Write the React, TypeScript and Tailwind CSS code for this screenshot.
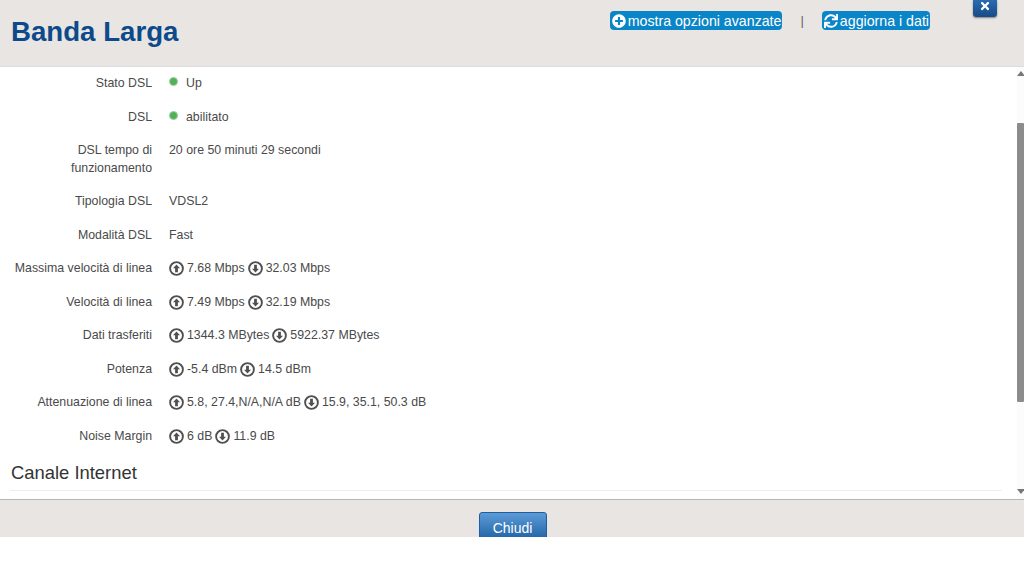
import { Fragment } from "react";
import { FaPlusCircle, FaSync, FaTimes } from "react-icons/fa";

const Dir = ({ up }: { up?: boolean }) => (
  <svg viewBox="0 0 15 15" className={`h-[15px] w-[15px] shrink-0 text-[#505050] ${up ? "" : "rotate-180"}`}>
    <circle cx="7.5" cy="7.5" r="6.4" fill="none" stroke="currentColor" strokeWidth="1.9" />
    <polygon points="7.5,3.4 11,7.2 8.9,7.2 8.9,11.2 6.1,11.2 6.1,7.2 4,7.2" fill="currentColor" />
  </svg>
);

const Speeds = ({ up, down }: { up: string; down: string }) => (
  <div className="flex items-center gap-[3px]">
    <Dir up />
    <span>{up}</span>
    <Dir />
    <span>{down}</span>
  </div>
);

const Status = ({ text }: { text: string }) => (
  <div className="flex items-center">
    <span className="mb-[4px] h-[9px] w-[9px] rounded-full border border-[#9ad09c] bg-[#52b058]" />
    <span className="ml-[8px]">{text}</span>
  </div>
);

const rows = [
  { label: "Stato DSL", value: <Status text="Up" /> },
  { label: "DSL", value: <Status text="abilitato" /> },
  { label: "DSL tempo di funzionamento", value: "20 ore 50 minuti 29 secondi" },
  { label: "Tipologia DSL", value: "VDSL2" },
  { label: "Modalità DSL", value: "Fast" },
  { label: "Massima velocità di linea", value: <Speeds up="7.68 Mbps" down="32.03 Mbps" /> },
  { label: "Velocità di linea", value: <Speeds up="7.49 Mbps" down="32.19 Mbps" /> },
  { label: "Dati trasferiti", value: <Speeds up="1344.3 MBytes" down="5922.37 MBytes" /> },
  { label: "Potenza", value: <Speeds up="-5.4 dBm" down="14.5 dBm" /> },
  { label: "Attenuazione di linea", value: <Speeds up="5.8, 27.4,N/A,N/A dB" down="15.9, 35.1, 50.3 dB" /> },
  { label: "Noise Margin", value: <Speeds up="6 dB" down="11.9 dB" /> },
];

export default function App() {
  return (
    <div className="h-[571px] w-[1024px] overflow-hidden bg-white font-['Liberation_Sans',Arial,sans-serif] text-[12.35px] leading-[17.5px] text-[#4a4a4a]">
      <header className="flex h-[67px] items-start border-b border-[#dcdcdc] bg-[#e9e5e2]">
        <h1 className="mt-[15px] ml-[11px] text-[27.65px] leading-[33px] font-bold text-[#0c4a8c]">Banda Larga</h1>
        <div className="mt-[11px] ml-auto flex items-center text-[14.2px] leading-[18px] text-white">
          <a className="flex h-[19px] items-center gap-[2px] rounded-[4px] bg-[#0a85c7] pr-[1px] pl-[2px]">
            <FaPlusCircle size={14} />
            mostra opzioni avanzate
          </a>
          <span className="mx-[18px] text-[13px] text-[#666]">|</span>
          <a className="flex h-[19px] items-center gap-[2px] rounded-[4px] bg-[#0a85c7] pr-[1px] pl-[2px]">
            <FaSync size={14} />
            aggiorna i dati
          </a>
        </div>
        <button className="mr-[27px] ml-[43px] flex h-[17px] w-[24px] items-center justify-center rounded-b-[3px] bg-gradient-to-b from-[#2a6cb0] to-[#174a86] text-white shadow-[0_1px_2px_rgba(0,0,0,0.45)]">
          <FaTimes size={12} className="mb-[5px]" />
        </button>
      </header>

      <div className="flex h-[432px]">
        <main className="min-w-0 flex-1 pt-[8px]">
          <dl className="grid grid-cols-[152px_1fr] gap-x-[17px] gap-y-[16px]">
            {rows.map((row) => (
              <Fragment key={row.label}>
                <dt className="pl-[12px] text-right">{row.label}</dt>
                <dd>{row.value}</dd>
              </Fragment>
            ))}
          </dl>
          <h2 className="mt-[16.5px] ml-[11px] text-[18.4px] leading-[22px] text-[#333]">Canale Internet</h2>
          <div className="mt-[6px] mr-[15px] ml-[10px] border-t border-[#eeeeee]" />
        </main>
        <div className="flex w-[7px] flex-col items-center bg-[#fbfbfb]">
          <span className="mt-[4px] h-0 w-0 border-x-[4px] border-b-[5px] border-x-transparent border-b-[#777]" />
          <div className="mt-[47px] h-[279px] w-full rounded-[1px] bg-[#8c8c8c]" />
          <span className="mt-auto mb-[5px] h-0 w-0 border-x-[4px] border-t-[5px] border-x-transparent border-t-[#777]" />
        </div>
      </div>

      <footer className="flex h-[38px] items-start justify-center overflow-hidden border-t border-[#b5b5b5] bg-[#e9e5e2]">
        <button className="mt-[12px] ml-[1px] h-[26px] w-[68px] rounded-t-[3px] border border-[#1c5e9e] bg-gradient-to-b from-[#5c9bd6] to-[#2568aa] pt-[5px] text-[14px] leading-[18px] text-white">
          Chiudi
        </button>
      </footer>
    </div>
  );
}
